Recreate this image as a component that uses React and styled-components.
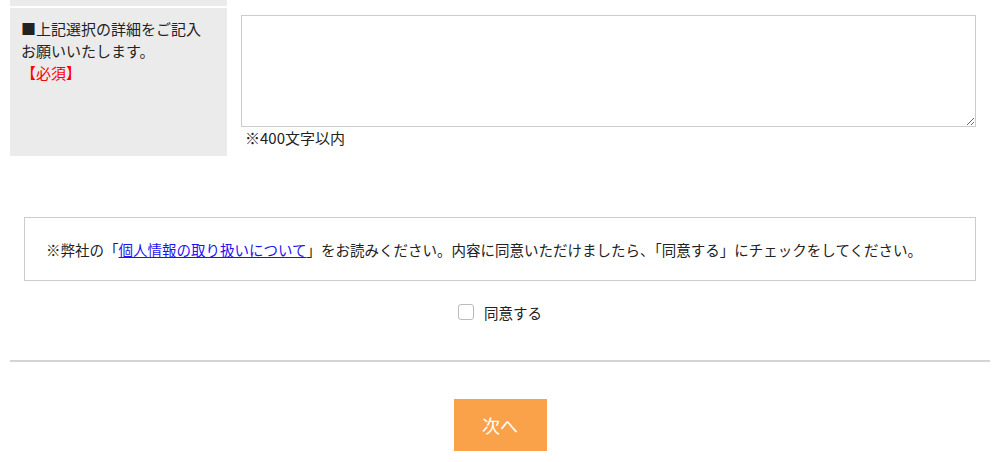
import React from "react";
import styled, { createGlobalStyle } from "styled-components";

const Global = createGlobalStyle`
  html, body { margin: 0; padding: 0; background: #fff; }
  body {
    font-family: "Noto Sans CJK JP", "Noto Sans", sans-serif;
    color: #222;
    font-size: 14px;
  }
`;

const Page = styled.div`
  width: 980px;
  padding: 0 10px;
`;

const Rows = styled.div`
  display: flex;
  flex-direction: column;
  gap: 2px;
`;

const Row = styled.div`
  display: flex;
`;

const Head = styled.div`
  width: 217px;
  flex: none;
  background: #ebebeb;
  box-sizing: border-box;
  padding: ${(p) => (p.$stub ? "0" : "10px 20px 10px 11px")};
  height: ${(p) => (p.$stub ? "6px" : "auto")};
  line-height: 22px;
  font-size: 15px;
`;

const Required = styled.span`
  color: #f00;
  display: block;
`;

const Cell = styled.div`
  flex: 1;
  padding: 7px 14px 8px 14px;
  display: flex;
  flex-direction: column;
`;

const Area = styled.textarea`
  width: 735px;
  height: 112px;
  box-sizing: border-box;
  border: 1px solid #ccc;
  margin: 0;
  font: inherit;
`;

const Note = styled.div`
  padding-left: 4px;
  line-height: 21px;
  font-size: 15px;
`;

const Notice = styled.div`
  margin: 61px 14px 0 14px;
  border: 1px solid #ccc;
  height: 64px;
  box-sizing: border-box;
  display: flex;
  align-items: center;
  padding-left: 21px;
  font-size: 14.5px;
  color: #222;
`;

const Link = styled.a`
  color: #1f12f5;
  text-decoration: underline;
`;

const Agree = styled.label`
  display: flex;
  justify-content: center;
  align-items: center;
  gap: 10px;
  margin-top: 23px;
  height: 16px;
  font-size: 14.5px;
`;

const Box = styled.span`
  width: 16px;
  height: 16px;
  box-sizing: border-box;
  border: 1px solid #bbb;
  border-radius: 3px;
  background: #fff;
  display: inline-block;
`;

const Rule = styled.hr`
  margin: 40px 0 0 0;
  border: none;
  border-top: 2px solid #d4d4d4;
  height: 0;
`;

const Actions = styled.div`
  display: flex;
  justify-content: center;
  margin-top: 37px;
`;

const Next = styled.button`
  width: 93px;
  height: 52px;
  border: none;
  background: #f9a24a;
  color: #fff;
  font-family: inherit;
  font-size: 18px;
  padding: 0;
`;

export default function App() {
  return (
    <>
      <Global />
      <Page>
        <Rows>
          <Row>
            <Head $stub />
          </Row>
          <Row>
            <Head>
              ■上記選択の詳細をご記入お願いいたします。
              <Required>【必須】</Required>
            </Head>
            <Cell>
              <Area />
              <Note>※400文字以内</Note>
            </Cell>
          </Row>
        </Rows>
        <Notice>
          ※弊社の「<Link href="#">個人情報の取り扱いについて</Link>」をお読みください。内容に同意いただけましたら、「同意する」にチェックをしてください。
        </Notice>
        <Agree>
          <Box />
          同意する
        </Agree>
        <Rule />
        <Actions>
          <Next>次へ</Next>
        </Actions>
      </Page>
    </>
  );
}
